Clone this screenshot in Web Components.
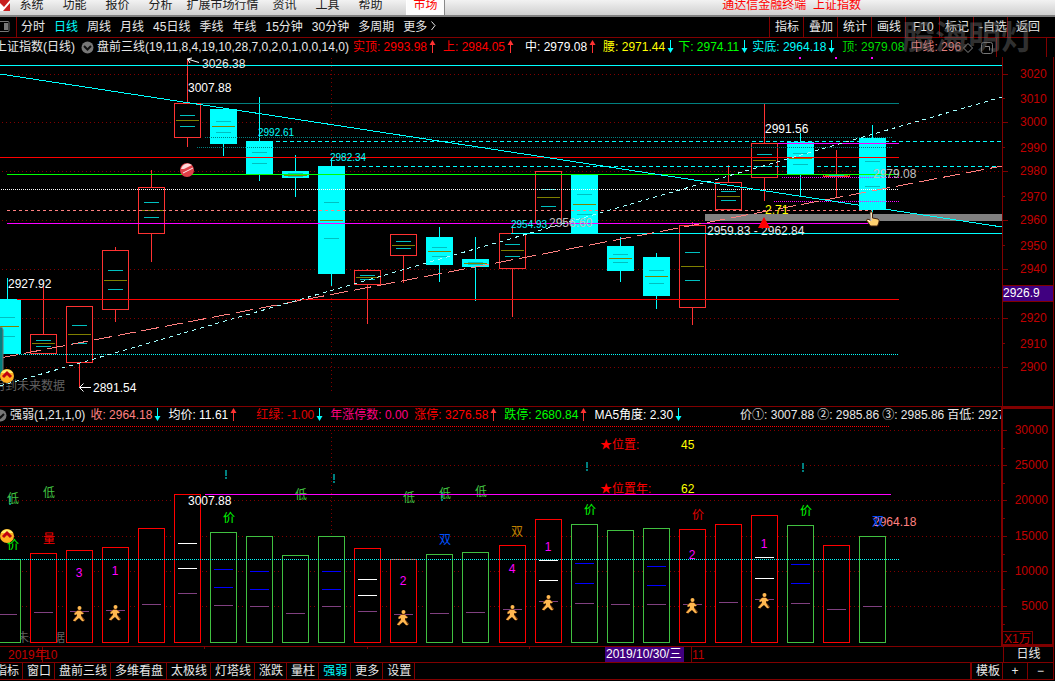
<!DOCTYPE html>
<html lang="zh-CN">
<head>
<meta charset="utf-8">
<title>通达信金融终端 上证指数</title>
<style>
  html, body { margin: 0; background: #000; }
  body {
    --line: #800000;
    --axis: #c00000;
    --hot: #00ffff;
    font: 12px/16px "Liberation Sans", "Noto Sans CJK SC", sans-serif;
    color: #e8e8e8;
    overflow: hidden;
  }
</style>
</head>
<body>
<trading-terminal></trading-terminal>

<template id="t-terminal">
  <style>
    :host { display: flex; flex-direction: column; min-height: 100vh; }
    price-panel { flex: 1; }
  </style>
  <menu-bar></menu-bar>
  <period-bar></period-bar>
  <price-panel></price-panel>
  <volume-panel></volume-panel>
  <date-axis></date-axis>
  <indicator-tabs></indicator-tabs>
</template>

<template id="t-menu">
  <style>
    :host { display: flex; height: 17px; box-sizing: border-box; overflow: hidden; align-items: flex-end;
      background: linear-gradient(#f2f2f2, #cfcfcf); border-bottom: 2px solid #808080; color: #202020; }
    nav { display: flex; align-items: flex-end; }
    button { all: unset; width: 43px; line-height: 16px; padding-bottom: 2px; text-align: center; white-space: nowrap; }
    button.long { width: 81px; }
    button.market { width: 37px; margin-left: 15px; color: #f00; background: #fcfcfc; box-shadow: 1px 0 #888, -1px 0 #fff; }
    .logo { width: 10px; height: 15px; flex: none; }
    .title { margin-left: auto; margin-right: 194px; padding-bottom: 2px; color: #f00; white-space: pre; }
  </style>
  <svg class="logo" viewBox="0 0 10 15"><path d="M0 0H10V11H0Z" fill="#c82020"/><path d="M0 3L4 7L10 0V3L3 11H0Z" fill="#fff"/></svg>
  <nav>
    <button>系统</button><button>功能</button><button>报价</button><button>分析</button><button class="long">扩展市场行情</button><button>资讯</button><button>工具</button><button>帮助</button><button class="market">市场</button>
  </nav>
  <span class="title">通达信金融终端  上证指数</span>
</template>

<template id="t-period">
  <style>
    :host { display: flex; position: relative; height: 20px; border-bottom: 1px solid var(--line); align-items: center; }
    button { all: unset; white-space: nowrap; line-height: 20px; }
    .layout { width: 16px; height: 20px; border-right: 1px solid var(--line); }
    .periods { display: flex; gap: 9px; padding-left: 4px; }
    .on { color: var(--hot); }
    .tools { display: flex; margin-left: auto; width: 286px; }
    .tools button { width: 28px; padding-left: 5px; border-left: 1px solid var(--line); }
    .tools button.mid { padding-left: 7px; width: 26px; }
    .tools button.last { padding-left: 8px; }
    .mark { position: absolute; right: 21px; top: 0; font: bold 33px/36px "Noto Sans CJK SC", sans-serif; color: rgba(110,110,110,.45); pointer-events: none; }
  </style>
  <button class="layout" aria-label="布局"><svg width="11" height="20"><rect x="-2" y="4.500" width="11" height="10" rx="1" fill="none" stroke="#777"/><rect x="4" y="6" width="4" height="7" fill="#777"/></svg></button>
  <div class="periods">
    <button>分时</button><button class="on">日线</button><button>周线</button><button>月线</button><button>45日线</button><button>季线</button><button>年线</button><button>15分钟</button><button>30分钟</button><button>多周期</button><button>更多<svg width="9" height="10"><path d="M4.500 0.500L8 4.500L4.500 9" fill="none" stroke="#e8e8e8"/></svg></button>
  </div>
  <div class="tools">
    <button>指标</button><button>叠加</button><button>统计</button><button>画线</button><button class="mid">F10</button><button>标记</button><button>-自选</button><button class="last">返回</button>
  </div>
  <div class="mark">股海明灯</div>
</template>

<template id="t-readout"><style>
    :host { display: block; white-space: nowrap; margin-right: 6px; flex: none; }
    :host([lead]) { margin-left: 4px; }
    :host([apart]) { margin-left: 12px; }
    :host([far]) { margin-left: 51px; }
    :host([dense]) { margin-right: 3px; }
    svg { vertical-align: -2px; }
  </style><slot></slot><svg width="0" height="13"></svg></template>

<template id="t-price">
  <style>
    :host { display: flex; flex-direction: column; min-height: 368px; }
    header { display: flex; height: 19px; align-items: center; overflow: hidden; line-height: 19px; }
    .name { margin-left: -5px; white-space: nowrap; flex: none; }
    .fold { margin: 0 3px 0 6px; flex: none; }
    .end { margin-left: auto; width: 49px; height: 19px; flex: none; border: solid var(--line); border-width: 0 1px; margin-right: 8px; }
    .params { white-space: nowrap; margin-right: 4px; flex: none; }
    .icons { flex: none; margin: 0 -60px 0 -4px; }
    .body { flex: 1; display: grid; grid-template-columns: 1fr 51px; border-right: 1px solid var(--line); margin-right: 1px; }
    svg.chart { width: 100%; height: 100%; min-height: 349px; display: block; }
  </style>
  <header>
    <span class="name">上证指数(日线)</span>
    <svg class="fold" width="13" height="13"><circle cx="6.500" cy="6.500" r="6" fill="#777"/><path d="M3 5L6.500 8.500L10 5" fill="none" stroke="#111" stroke-width="2"/></svg>
    <span class="params">盘前三线(19,11,8,4,19,10,28,7,0,2,0,1,0,0,14,0)</span>
    <read-out style="color:#f00" dir-mark="up">实顶: 2993.98</read-out>
    <read-out style="color:#f00" dir-mark="up">上: 2984.05</read-out>
    <read-out lead style="color:#fff" dir-mark="up">中: 2979.08</read-out>
    <read-out dense style="color:#ff0" dir-mark="down">腰: 2971.44</read-out>
    <read-out dense style="color:#0f0" dir-mark="down">下: 2974.11</read-out>
    <read-out style="color:#0ff" dir-mark="down">实底: 2964.18</read-out>
    <read-out style="color:#0d0">顶: 2979.08</read-out>
    <read-out style="color:#e08080">中线: 296</read-out>
    <svg class="icons" width="32" height="14"><path d="M5 2.500L9.500 7L5 11.500L0.500 7Z" fill="none" stroke="#888"/><rect x="18.500" y="1.500" width="11" height="11" rx="2" fill="none" stroke="#777"/><path d="M22 5.500h4.500v4" fill="none" stroke="#888"/></svg>
    <span class="end"></span>
  </header>
  <div class="body"><svg class="chart plot" role="img" aria-label="K线图"></svg><svg class="chart axis"></svg></div>
</template>

<template id="t-volume">
  <style>
    :host { display: grid; grid-template-columns: 1fr 53px; border-top: 1px solid var(--line); height: 239px; margin-right: 1px; }
    .left { min-width: 0; }
    header { display: flex; height: 18px; line-height: 17px; align-items: flex-start; overflow: hidden; }
    .fold { margin: 2px 3px 0 -6px; flex: none; }
    .params { margin-right: 5px; white-space: nowrap; flex: none; }
    svg.chart { width: 100%; height: 221px; display: block; }
    svg.axis { height: 239px; }
  </style>
  <div class="left">
    <header>
      <svg class="fold" width="13" height="13"><circle cx="6.500" cy="6.500" r="6" fill="#777"/><path d="M3 5L6.500 8.500L10 5" fill="none" stroke="#111" stroke-width="2"/></svg>
      <span class="params">强弱(1,21,1,0)</span>
      <read-out style="color:#ff8080" dir-mark="down">收: 2964.18</read-out>
      <read-out style="color:#fff" dir-mark="up">均价: 11.61</read-out>
      <read-out apart style="color:#e00000" dir-mark="down">红绿: -1.00</read-out>
      <read-out style="color:#ff0080">年涨停数: 0.00</read-out>
      <read-out style="color:#f00" dir-mark="up">涨停: 3276.58</read-out>
      <read-out style="color:#0f0" dir-mark="up">跌停: 2680.84</read-out>
      <read-out style="color:#fff" dir-mark="down">MA5角度: 2.30</read-out>
      <read-out far dense>价①: 3007.88</read-out>
      <read-out dense>②: 2985.86</read-out>
      <read-out dense>③: 2985.86</read-out>
      <read-out>百低: 2927.92</read-out>
    </header>
    <svg class="chart plot" role="img" aria-label="成交量图"></svg>
  </div>
  <svg class="chart axis"></svg>
</template>

<template id="t-date">
  <style>
    :host { display: grid; grid-template-columns: 1fr 50px; height: 15px; border-top: 1px solid var(--line); border-right: 1px solid var(--line); margin-right: 1px; line-height: 15px; }
    svg { width: 100%; height: 15px; display: block; }
    button { all: unset; border-left: 1px solid var(--line); text-align: center; line-height: 15px; }
  </style>
  <svg class="plot"></svg><button>日线</button>
</template>

<template id="t-tabs">
  <style>
    :host { display: flex; height: 16px; border: solid var(--line); border-width: 1px 1px 1px 0; margin: 0 1px 1px 0; overflow: hidden; }
    button { all: unset; padding: 0 3px 0 4px; border-right: 1px solid var(--line); line-height: 16px; white-space: nowrap; }
    nav { display: flex; margin-left: -9px; }
    .on { color: var(--hot); }
    .zoom { display: flex; margin-left: auto; }
    .zoom .tpl { border-left: 2px solid var(--line); padding: 0 2px 0 4px; }
    .zoom .step { width: 24px; padding: 0; text-align: center; }
    .zoom .step:last-child { border-right: 0; width: 25px; }
  </style>
  <nav><button>指标</button><button>窗口</button><button>盘前三线</button><button>多维看盘</button><button>太极线</button><button>灯塔线</button><button>涨跌</button><button>量柱</button><button class="on">强弱</button><button>更多</button><button>设置</button></nav>
  <div class="zoom"><button class="tpl">模板</button><button class="step">+</button><button class="step">−</button></div>
</template>

<script>
const define = (name, tpl, ready) => customElements.define(name, class extends HTMLElement {
  constructor() {
    super();
    this.attachShadow({ mode: 'open' }).append(document.getElementById(tpl).content.cloneNode(true));
  }
  connectedCallback() { if (ready) ready(this, this.shadowRoot); }
});

/* drawing helpers */
const h = (x1, x2, y, c, dash = '') => `<line x1="${x1}" x2="${x2}" y1="${y + .5}" y2="${y + .5}" stroke="${c}" stroke-dasharray="${dash}"/>`;
const v = (x, y1, y2, c, dash = '') => `<line x1="${x + .5}" x2="${x + .5}" y1="${y1}" y2="${y2}" stroke="${c}" stroke-dasharray="${dash}"/>`;
const t = (x, y, s, c, extra = '') => `<text x="${x}" y="${y + 4}" fill="${c}" ${extra}>${s}</text>`;
const mid = (x, y, s, c) => t(x, y, s, c, 'text-anchor="middle"');
const box = (x, y1, y2, c, fill) => `<rect x="${x - 12.5}" y="${y1 + .5}" width="26" height="${y2 - y1}" stroke="${c}" fill="${fill}"/>`;
const chevron = (x, y) => `<circle cx="${x}" cy="${y}" r="7" fill="#ffb020"/><path d="M${x - 6} ${y - 3}a7 7 0 0 1 12 0z" fill="#fff070"/><path d="M${x - 4} ${y + 1}L${x} ${y - 3}L${x + 4} ${y + 1}" fill="none" stroke="#c00010" stroke-width="3"/>`;
const runner = (x, y) => `<g transform="translate(${x} ${y})"><path d="M0 -4V2M-4 0L0 -3L4 0M0 1L-5 7M0 1L5 7" fill="none" stroke="#7a4010" stroke-width="3"/><circle cx="0.500" cy="-6" r="2" fill="#ffb850"/><path d="M-2 -3H2L5 0L2 0V2L5 7H3L0 4L-4 7H-6L-2 2V0L-4 1L-5 0Z" fill="#ffb850"/></g>`;

define('trading-terminal', 't-terminal');
define('menu-bar', 't-menu');
define('period-bar', 't-period');
define('indicator-tabs', 't-tabs');

define('read-out', 't-readout', (el, root) => {
  const d = el.getAttribute('dir-mark');
  if (!d) return;
  const svg = root.querySelector('svg');
  svg.setAttribute('width', 10);
  svg.innerHTML = d === 'up'
    ? '<path d="M5.500 1V13" stroke="#ff3232"/><path d="M5.500 0L8.500 5H2.500Z" fill="#ff3232"/>'
    : '<path d="M5.500 0V12" stroke="#0ff"/><path d="M5.500 13L8.500 8H2.500Z" fill="#0ff"/>';
});

/* centre x, wick top, body top, body bottom, wick bottom, inner marks (teal, olive, teal), falling */
const candles = [
  [7,278,299,353,354,317,326,336,1],[43,285,334,353,353,340,343,346,0],[79,306,306,362,387,325,334,343,0],
  [115,247,250,309,322,270,280,289,0],[151,170,187,233,262,202,210,217,0],[187,59,103,137,147,115,120,126,0],
  [223,108,109,143,156,121,126,132,1],[259,97,141,173,181,152,157,163,1],[295,155,171,177,197,173,175,176,1],
  [331,158,166,273,286,202,220,238,1],[367,269,270,284,324,275,277,279,0],[403,234,234,255,283,241,245,248,0],
  [439,227,237,264,282,247,251,256,1],[475,237,259,266,301,262,263,264,1],[512,226,233,268,317,244,250,256,0],
  [548,171,171,223,223,189,197,206,0],[584,174,174,233,234,194,204,214,1],[620,237,246,270,282,254,258,262,1],
  [656,253,257,295,309,270,276,283,1],[692,222,225,307,325,252,266,280,0],[728,165,182,209,209,191,196,200,0],
  [764,104,143,177,201,154,160,166,0],[800,133,142,174,196,153,158,164,1],[836,150,174,176,198,175,175,175,0],
  [872,125,138,209,214,161,174,186,1]
];

define('price-panel', 't-price', (el, root) => {
  const red = '#ff3232', cy = '#00ffff', teal = '#008080', mg = '#ff00ff';
  let s = '';
  for (const y of [74,122,171,220,269,318,367]) s += h(2, '100%', y, '#800000', '1 3');
  s += v(331, 58, 392, '#800000', '1 3');
  s += t(-7, 386, '用到未来数据', '#606060');
  for (const [x,a,b,c,d,m1,m2,m3,down] of candles) {
    const k = down ? cy : red;
    s += v(x, a, d, k) + box(x, b, c, k, down ? cy : '#000');
    s += h(x - 7, x + 8, m1, '#00c0c0') + h(x - 11, x + 12, m2, '#808000') + h(x - 7, x + 8, m3, '#00c0c0');
  }
  s += '<rect x="705" y="214" width="100%" height="7" fill="#808080"/>';
  s += h(0,'100%',65,cy) + h(201,899,103,teal) + h(205,892,137,teal,'1 1') + h(197,892,147,teal,'1 1');
  s += h(276,'100%',141,cy,'4 3') + h(348,'100%',166,cy,'4 3') + h(0,899,157,'#f00') + h(7,899,174,'#0f0');
  s += h(1,899,189,'#fff','1 1') + h(7,872,210,'#ff8080','3 3') + h(7,872,223,mg) + h(778,899,143,mg);
  s += h(782,899,177,mg,'1 1') + h(774,899,201,mg,'1 1') + h(511,'100%',233,cy) + h(17,899,299,'#f00') + h(17,899,354,cy,'1 1');
  s += '<g shape-rendering="crispEdges"><path d="M0 74L1002 227" stroke="#0ff"/><path d="M0 358L1002 166" stroke="#ff8080" stroke-dasharray="18 6"/><path d="M0 386L1002 97" stroke="#a0ffff" stroke-dasharray="4 4"/></g>';
  for (const x of [799,835,871]) s += `<rect x="${x}" y="57" width="2" height="2" fill="${mg}"/>`;
  s += t(202,64,'3026.38','#e8e8e8') + t(188,88,'3007.88','#fff') + t(765,129,'2991.56','#fff') + t(8,284,'2927.92','#fff') + t(93,388,'2891.54','#fff');
  s += t(258,132,'2992.61',cy,'font-size="10"') + t(330,157,'2982.34',cy,'font-size="10"') + t(511,224,'2954.93',cy,'font-size="10"');
  s += t(549,223,'2956.60','#c0c0c0') + t(873,174,'2979.08','#c0c0c0') + t(765,210,'2.71','#ff0') + t(707,231,'2959.83 - 2962.84','#e8e8e8');
  s += '<path d="M187.500 59L199 62.500M187.500 59L192 58M187.500 59L190 63" stroke="#fff" fill="none"/><path d="M79.500 387.500H91M83.500 383.500L79.500 387.500L83.500 391.500" stroke="#fff" fill="none"/>';
  s += '<circle cx="187" cy="170" r="7" fill="#e04048"/><path d="M181 169a7 7 0 0 1 11 -4L184 169Z" fill="#ffd8d8"/><path d="M183 173L193 168" stroke="#ffe8e8" stroke-width="1"/>';
  s += '<rect x="-4" y="327" width="7" height="50" rx="3" fill="#008080" stroke="#777"/>' + chevron(7, 376);
  s += '<path d="M764 217L770 228H758Z" fill="#f00"/>';
  s += '<path d="M870 211.500q2 -1 2.500 1.500v5l5.500 1q1.500 1 1 3l-1.500 4h-7l-4 -5.500q0 -2 2.500 -1l2 1z" fill="#ffd070" stroke="#402010"/><path d="M871 213v8M868 220l2 2" stroke="#fff"/>';
  root.querySelector('.plot').innerHTML = `<g transform="translate(0 -57)">${s}</g>`;

  let a = v(0, 57, 2000, '#800000');
  [[3020,74],[3010,99],[3000,122],[2990,148],[2980,171],[2970,197],[2960,220],[2950,246],[2940,269],[2920,318],[2910,344],[2900,367]].forEach(([p, y]) => {
    a += h(0, p % 20 ? 3 : 6, p % 20 ? y - 1 : y, '#800000') + t(18, y, p, '#c00000');
  });
  a += '<rect x="0.500" y="285.500" width="51" height="16" fill="#400080" stroke="#800000"/>' + t(1, 293, '2926.9', '#fff');
  root.querySelector('.axis').innerHTML = `<g transform="translate(0 -57)">${a}</g>`;
});

/* centre x, top, colour, purple mark, upper marks, mark colour */
const bars = [
  [7,559,'g',614],[43,553,'r',612],[79,550,'r',611],[115,547,'r',610],[151,528,'r',604],[187,494,'r',593,[543,568],'w'],
  [223,532,'g',605,[569,587],'b'],[259,536,'g',606,[571,589],'b'],[295,555,'g',613],[331,536,'g',606,[571,589],'b'],
  [367,548,'r',611,[579,595],'w'],[403,559,'r',614],[439,554,'g',613],[475,552,'g',612],[512,545,'r',609],
  [548,519,'r',601,[560,580],'w'],[584,524,'g',603,[563,583],'b'],[620,530,'g',604],[656,528,'g',604,[566,585],'b'],
  [692,529,'r',604],[728,524,'r',602],[764,515,'r',599,[557,578],'w'],[800,525,'g',603,[564,583],'b'],[836,545,'r',609],[872,536,'g',606]
];

define('volume-panel', 't-volume', (el, root) => {
  const col = { g: '#40c040', r: '#ff0000', w: '#ffffff', b: '#0000ff' }, mg = '#ff00ff';
  let s = '';
  for (const y of [430,465,500,536,571,606]) s += h(2, '100%', y, '#800000', '1 3');
  s += v(331, 433, 640, '#800000', '1 3') + t(-7, 638, '用到未来数据', '#606060');
  for (const [x, top, c, p, ms, mc] of bars) {
    s += box(x, top, 642, col[c], '#000') + h(x - 9, x + 10, p, '#804080');
    for (const m of ms || []) s += h(x - 9, x + 10, m, col[mc]);
  }
  s += h(0, 890, 426, '#f00', '1 1') + h(0, 899, 559, '#0ff', '1 1');
  for (const [x, y] of [[225,470],[333,474],[586,462],[802,463],[9,496],[441,492]]) s += `<path d="M${x} ${y}h2v6h-2zM${x} ${y + 7}h2v2h-2z" fill="#008080"/>`;
  for (const [x, y, c] of [[79,573,3],[115,571,1],[403,581,2],[512,569,4],[548,547,1],[692,555,2],[764,544,1]]) s += mid(x, y, c, mg);
  for (const [x, y] of [[79,614],[115,613],[403,618],[512,613],[548,603],[692,606],[764,601]]) s += runner(x, y);
  for (const [x, y] of [[13,499],[49,493],[301,495],[409,498],[445,494],[481,492]]) s += mid(x, y, '低', '#40c040');
  for (const [x, y] of [[13,545],[229,518],[590,510],[806,511]]) s += mid(x, y, '价', '#0f0');
  s += mid(698,515,'价','#e00000') + mid(49,539,'量','#f00') + mid(445,540,'双','#0050ff') + mid(517,532,'双','#c08000');
  s += t(873,522,'2964.18','#ff8080') + mid(878,522,'双','#0050ff') + t(188,501,'3007.88','#fff');
  s += t(600,445,'★位置:','#f00') + t(681,445,'45','#ff0') + t(600,489,'★位置年:','#f00') + t(681,489,'62','#ff0');
  s += h(205, 891, 494, mg) + chevron(7, 536);
  root.querySelector('.plot').innerHTML = `<g transform="translate(0 -425)">${s}</g>`;

  let a = '<rect x="1" y="408" width="51" height="237" fill="none" stroke="#800000" stroke-width="2"/>';
  [[30000,430],[25000,465],[20000,500],[15000,536],[10000,571],[5000,606]].forEach(([n, y]) => {
    a += h(2, 6, y, '#800000') + h(2, 4, y + 18, '#800000') + t(47, y, n, '#c00000', 'text-anchor="end"');
  });
  a += '<rect x="1.500" y="631.500" width="30" height="14" fill="none" stroke="#800000"/>' + t(3, 639, 'X1万', '#c00000');
  root.querySelector('.axis').innerHTML = `<g transform="translate(0 -407)">${a}</g>`;
});

define('date-axis', 't-date', (el, root) => {
  let s = v(42, 0, 15, '#800000') + t(8, 8, '2019年', '#c00000') + t(44, 8, '10', '#c00000');
  for (const x of [204,367,529]) s += v(x, 0, 2, '#800000');
  s += '<rect x="605" y="0" width="79" height="15" fill="#400080"/>' + t(606, 7, '2019/10/30/三', '#fff') + v(691, 0, 15, '#800000') + t(692, 8, '11', '#c00000');
  root.querySelector('.plot').innerHTML = s;
});
</script>
</body>
</html>
